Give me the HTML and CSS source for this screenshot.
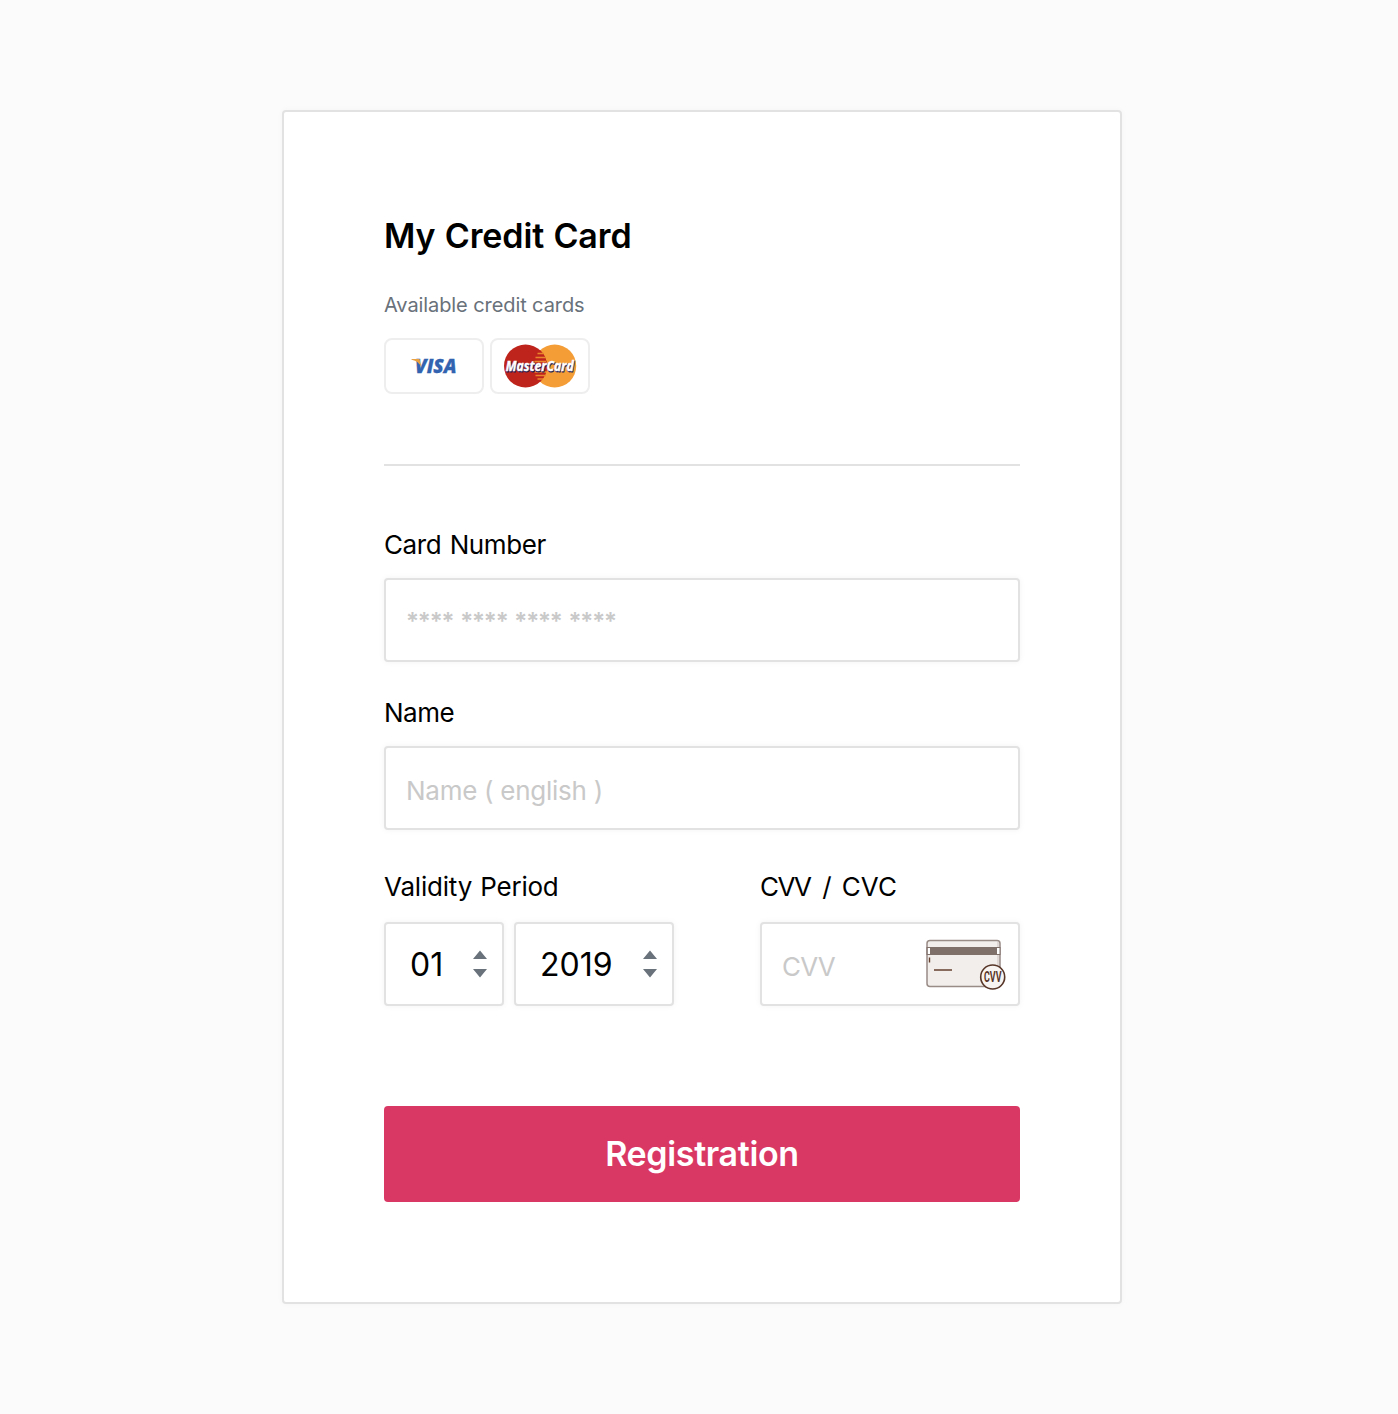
FILE: index.html
```html
<!DOCTYPE html>
<html lang="en">
<head>
<meta charset="utf-8">
<title>My Credit Card</title>
<link rel="stylesheet" href="styles.css">
</head>
<body>
<main class="panel">
  <header class="intro">
    <h1 class="title">My Credit Card</h1>
    <p class="subtitle">Available credit cards</p>
    <div class="brands">
      <div class="brand">
        <svg width="96" height="52" viewBox="0 0 96 52" role="img" aria-label="Visa">
          <text class="visa" x="29" y="33" textLength="41.500" lengthAdjust="spacingAndGlyphs">VISA</text>
          <path d="M25.500 19H33.500L35.500 27.500C33.500 23 30.500 20.800 25.500 19.700Z" fill="#e9a040"/>
        </svg>
      </div>
      <div class="brand">
        <svg width="96" height="52" viewBox="0 0 96 52" role="img" aria-label="MasterCard">
          <circle cx="62.700" cy="26" r="21.500" fill="#f49d37"/>
          <circle cx="33.500" cy="26" r="21.500" fill="#bf241c"/>
          <path d="M48.100 10.200A21.500 21.500 0 0 1 48.100 41.800A21.500 21.500 0 0 1 48.100 10.200Z" fill="#bf241c"/>
          <path d="M45.500 13.500H52M43.500 17.500H54M42.500 21.500H54M42.500 32H54M43.500 35.500H54M45.500 39H51" stroke="#e9872c" stroke-width="1.600"/>
          <text class="mastercard mastercard-shadow" x="14.200" y="31.500" textLength="68" lengthAdjust="spacingAndGlyphs">MasterCard</text>
          <text class="mastercard" x="13.700" y="31" textLength="68" lengthAdjust="spacingAndGlyphs">MasterCard</text>
        </svg>
      </div>
    </div>
  </header>
  <form class="form">
    <div class="field">
      <label class="label label-number" for="number">Card Number</label>
      <input class="control control-number" id="number" type="text" placeholder="**** **** **** ****">
    </div>
    <div class="field">
      <label class="label label-name" for="name">Name</label>
      <input class="control control-name" id="name" type="text" placeholder="Name ( english )">
    </div>
    <div class="row">
      <div class="field field-short">
        <span class="label label-period">Validity Period</span>
        <div class="selects">
          <div class="control select select-month">
            <span class="month">01</span>
            <svg class="arrows" width="14" height="28" viewBox="0 0 14 28"><path d="M7 .5 14 9H0ZM0 19H14L7 27.500Z" fill="#69717a"/></svg>
          </div>
          <div class="control select select-year">
            <span class="year">2019</span>
            <svg class="arrows" width="14" height="28" viewBox="0 0 14 28"><path d="M7 .5 14 9H0ZM0 19H14L7 27.500Z" fill="#69717a"/></svg>
          </div>
        </div>
      </div>
      <div class="field field-short">
        <label class="label label-cvv" for="cvv"><span class="kern">CV</span>V / CVC</label>
        <div class="control cvv">
          <input class="cvv-input" id="cvv" type="text" placeholder="CVV">
          <svg class="cvv-icon" width="90" height="54" viewBox="0 0 90 54">
            <g transform="translate(0 2)">
            <rect x="1" y="1.500" width="73" height="46" rx="3" fill="#f2eeeb" stroke="#998b86" stroke-width="1.500"/>
            <path d="M72 3V46" stroke="#d8d1ce" stroke-width="1.500"/>
            <path d="M.5 8H74.500V16H.5Z" fill="#7f706a"/>
            <path d="M1.800 9H4V15H1.800ZM71 9H73.500V15H71Z" fill="#fff"/>
            <path d="M3.500 18.500V23.500M8 31H26" stroke="#66402f" stroke-width="1.400"/>
            <circle cx="66.700" cy="38" r="12" fill="#f7f4f2" stroke="#573628" stroke-width="1.600"/>
            <text class="cvv-mark" x="58" y="43.200" textLength="17.500" lengthAdjust="spacingAndGlyphs">CVV</text>
            </g>
          </svg>
        </div>
      </div>
    </div>
    <button class="submit" type="button">Registration</button>
  </form>
</main>
</body>
</html>
```
FILE: styles.css
```css
* { box-sizing: border-box; }

body {
  margin: 0;
  min-height: 1414px;
  padding: 110px 0 0 282px;
  background: #fbfbfb;
  color: #000;
  font-family: Inter, "Liberation Sans", sans-serif;
}

.panel {
  width: 840px;
  height: 1194px;
  padding: 104px 100px 100px;
  border: 2px solid #e2e2e2;
  border-radius: 4px;
  background: #fff;
  box-shadow: 0 0 6px rgba(0, 0, 0, .03);
}

.intro {
  padding-bottom: 70px;
  border-bottom: 2px solid #e2e2e2;
}

.title {
  margin: 0;
  font-size: 34px;
  font-weight: 600;
  line-height: 40px;
  letter-spacing: -.1px;
  word-spacing: .8px;
}

.subtitle {
  margin: 37px 0 21px;
  color: #69717a;
  font-size: 20px;
  line-height: 24px;
  letter-spacing: -.09px;
}

.brands { display: flex; gap: 6px; }

.brand {
  width: 100px;
  height: 56px;
  border: 2px solid #eee;
  border-radius: 8px;
}

.brand svg { display: block; overflow: visible; }

.visa {
  fill: #3163b0;
  stroke: #3163b0;
  stroke-width: .3px;
  font: italic 800 19px "Open Sans", sans-serif;
}

.mastercard {
  fill: #fff;
  stroke: #fff;
  stroke-width: .4px;
  font: italic 700 14px "Open Sans", sans-serif;
}

.mastercard-shadow {
  fill: #201c58;
  stroke: #201c58;
  stroke-width: .8px;
}

.form { padding-top: 64px; }

.field {
  display: flex;
  flex-direction: column;
  gap: 18px;
  margin-bottom: 36px;
}

.label {
  font-size: 26px;
  line-height: 30px;
}

.label-number { letter-spacing: -.4px; word-spacing: 1.5px; }
.label-name { letter-spacing: -.5px; }
.label-period { letter-spacing: -.2px; word-spacing: 1px; }
.label-cvv { word-spacing: 3px; }
.kern { letter-spacing: -1.5px; }

.control {
  width: 100%;
  height: 84px;
  padding: 0 20px;
  border: 2px solid #e2e2e2;
  border-radius: 4px;
  background: #fff;
  box-shadow: 0 0 6px rgba(0, 0, 0, .05);
  font: 26px Inter, "Liberation Sans", sans-serif;
  outline: 0;
}

.control::placeholder,
.cvv-input::placeholder { color: #c9c9c9; opacity: 1; }

.control-number {
  padding-top: 2px;
  font-size: 24px;
  font-weight: 600;
  letter-spacing: -1.1px;
  word-spacing: 1.8px;
}

.control-name { padding-top: 4px; letter-spacing: -.27px; }

.row {
  display: flex;
  justify-content: space-between;
  margin-top: 42px;
}

.field-short { gap: 20px; margin: 0; }

.selects { display: flex; gap: 10px; }

.select {
  display: flex;
  align-items: center;
  justify-content: space-between;
  padding: 0 15px 0 24px;
  font-size: 32px;
}

.select-month { width: 120px; }
.select-year { width: 160px; }

.cvv {
  display: flex;
  align-items: center;
  width: 260px;
  padding: 0 2px 0 20px;
}

.cvv-input {
  flex: 1;
  min-width: 0;
  height: 80px;
  padding: 4px 0 0;
  border: 0;
  background: none;
  font: inherit;
  letter-spacing: -.8px;
  outline: 0;
}

.cvv-icon { flex: none; }

.cvv-mark {
  fill: #573628;
  font: 700 14.5px "Roboto", sans-serif;
}

.submit {
  width: 100%;
  height: 96px;
  margin-top: 100px;
  padding: 0 0 2px;
  border: 0;
  border-radius: 4px;
  background: #da3864;
  color: #fff;
  font: 600 34px Inter, "Liberation Sans", sans-serif;
  letter-spacing: -.35px;
}
```
